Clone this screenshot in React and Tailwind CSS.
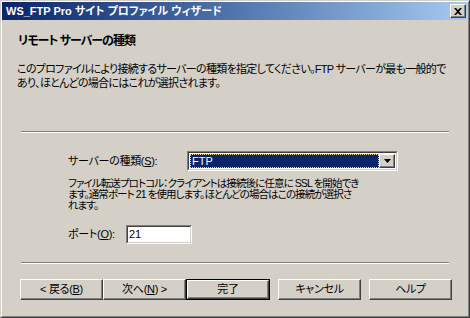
import React from 'react';

const font = "font-['Liberation_Sans','Noto_Sans_CJK_JP',sans-serif] [font-feature-settings:'palt']";

// classic raised button bevel
const bevel = 'border border-t-white border-l-white border-r-[#404040] border-b-[#404040] shadow-[inset_-1px_-1px_#808080]';

const Separator = () => (
    <div className="mx-[19px] h-[2px] border-t border-t-[#808080] border-b border-b-white" />
);

const WizButton = ({ children, isDefault, className = '' }) => (
    <div className={`h-[21px] ${isDefault ? 'w-[84px] border border-black' : 'w-[83px]'} ${className}`}>
        <div className={`h-full w-full ${bevel} flex items-center justify-center text-[11px] tracking-[-0.3px] text-black leading-none`}>
            {children}
        </div>
    </div>
);

const App = () => {
    return (
        <div className={`w-[470px] h-[318px] overflow-hidden bg-[#d4d0c8] ${font} border border-t-[#d4d0c8] border-l-[#d4d0c8] border-r-[#404040] border-b-[#404040]`}>
            <div className="h-full w-full border border-t-white border-l-white border-r-[#808080] border-b-[#808080] flex flex-col">
                {/* Title bar */}
                <div className="h-[18px] mr-[1px] flex items-center justify-between bg-gradient-to-r from-[#0a246a] to-[#a6caf0] pl-[4px] pr-[1px]">
                    <span className="text-white font-bold text-[11px] leading-none whitespace-nowrap">
                        WS_FTP Pro サイト プロファイル ウィザード
                    </span>
                    <div className={`w-[16px] h-[14px] bg-[#d4d0c8] ${bevel} flex items-center justify-center`}>
                        <svg width="8" height="7" viewBox="0 0 8 7">
                            <path d="M0 0h2l2 2 2-2h2L5 3.5 8 7H6L4 5 2 7H0l3-3.5z" fill="#000" />
                        </svg>
                    </div>
                </div>

                {/* Header */}
                <div className="mt-[14px] pl-[16px] text-[12px] tracking-[-1px] leading-[14px] font-bold text-black whitespace-nowrap">
                    リモート サーバーの種類
                </div>
                <div className="mt-[14px] pl-[15px] text-[11px] tracking-[-0.7px] leading-[14px] text-black">
                    <div className="whitespace-nowrap">このプロファイルにより接続するサーバーの種類を指定してください。FTP サーバーが最も一般的で</div>
                    <div className="whitespace-nowrap">あり、ほとんどの場合にはこれが選択されます。</div>
                </div>

                <div className="mt-[41px]">
                    <Separator />
                </div>

                {/* Server type */}
                <div className="mt-[18px] flex items-center pl-[66px]">
                    <div className="w-[119px] text-[11px] tracking-[-0.3px] leading-none text-black whitespace-nowrap">
                        サーバーの種類(<span className="underline">S</span>):
                    </div>
                    <div className="w-[211px] h-[20px] border border-t-[#808080] border-l-[#808080] border-r-white border-b-white">
                        <div className="h-full w-full bg-white border border-t-[#404040] border-l-[#404040] border-r-[#d4d0c8] border-b-[#d4d0c8] flex p-[1px]">
                            <div className="flex-1 bg-[#0a246a] border border-dotted border-[#e8d890] flex items-center pl-[1px]">
                                <span className="text-white text-[11px] leading-none">FTP</span>
                            </div>
                            <div className={`w-[16px] h-full bg-[#d4d0c8] ${bevel} flex items-center justify-center`}>
                                <svg width="7" height="4" viewBox="0 0 7 4">
                                    <path d="M0 0h7L3.5 4z" fill="#000" />
                                </svg>
                            </div>
                        </div>
                    </div>
                </div>

                <div className="mt-[7px] pl-[66px] text-[10.5px] tracking-[-0.9px] leading-[11px] text-black">
                    <div className="whitespace-nowrap">ファイル転送プロトコル：クライアントは接続後に任意に SSL を開始でき</div>
                    <div className="whitespace-nowrap">ます。通常ポート 21 を使用します。ほとんどの場合はこの接続が選択さ</div>
                    <div className="whitespace-nowrap">れます。</div>
                </div>

                {/* Port */}
                <div className="mt-[14px] flex items-center pl-[66px]">
                    <div className="w-[58px] text-[11px] tracking-[-0.3px] leading-none text-black whitespace-nowrap">
                        ポート(<span className="underline">O</span>):
                    </div>
                    <div className="w-[66px] h-[19px] border border-t-[#808080] border-l-[#808080] border-r-white border-b-white">
                        <div className="h-full w-full bg-white border border-t-[#404040] border-l-[#404040] border-r-[#d4d0c8] border-b-[#d4d0c8] flex items-center pl-[1px]">
                            <span className="text-[11px] leading-none text-black">21</span>
                        </div>
                    </div>
                </div>

                <div className="mt-[18px]">
                    <Separator />
                </div>

                {/* Buttons */}
                <div className="mt-[15px] flex pl-[18px]">
                    <WizButton>&lt; 戻る(<span className="underline">B</span>)</WizButton>
                    <WizButton>次へ(<span className="underline">N</span>) &gt;</WizButton>
                    <WizButton isDefault>完了</WizButton>
                    <WizButton className="ml-[8px]">キャンセル</WizButton>
                    <WizButton className="ml-[8px]">ヘルプ</WizButton>
                </div>
            </div>
        </div>
    );
};

export default App;
